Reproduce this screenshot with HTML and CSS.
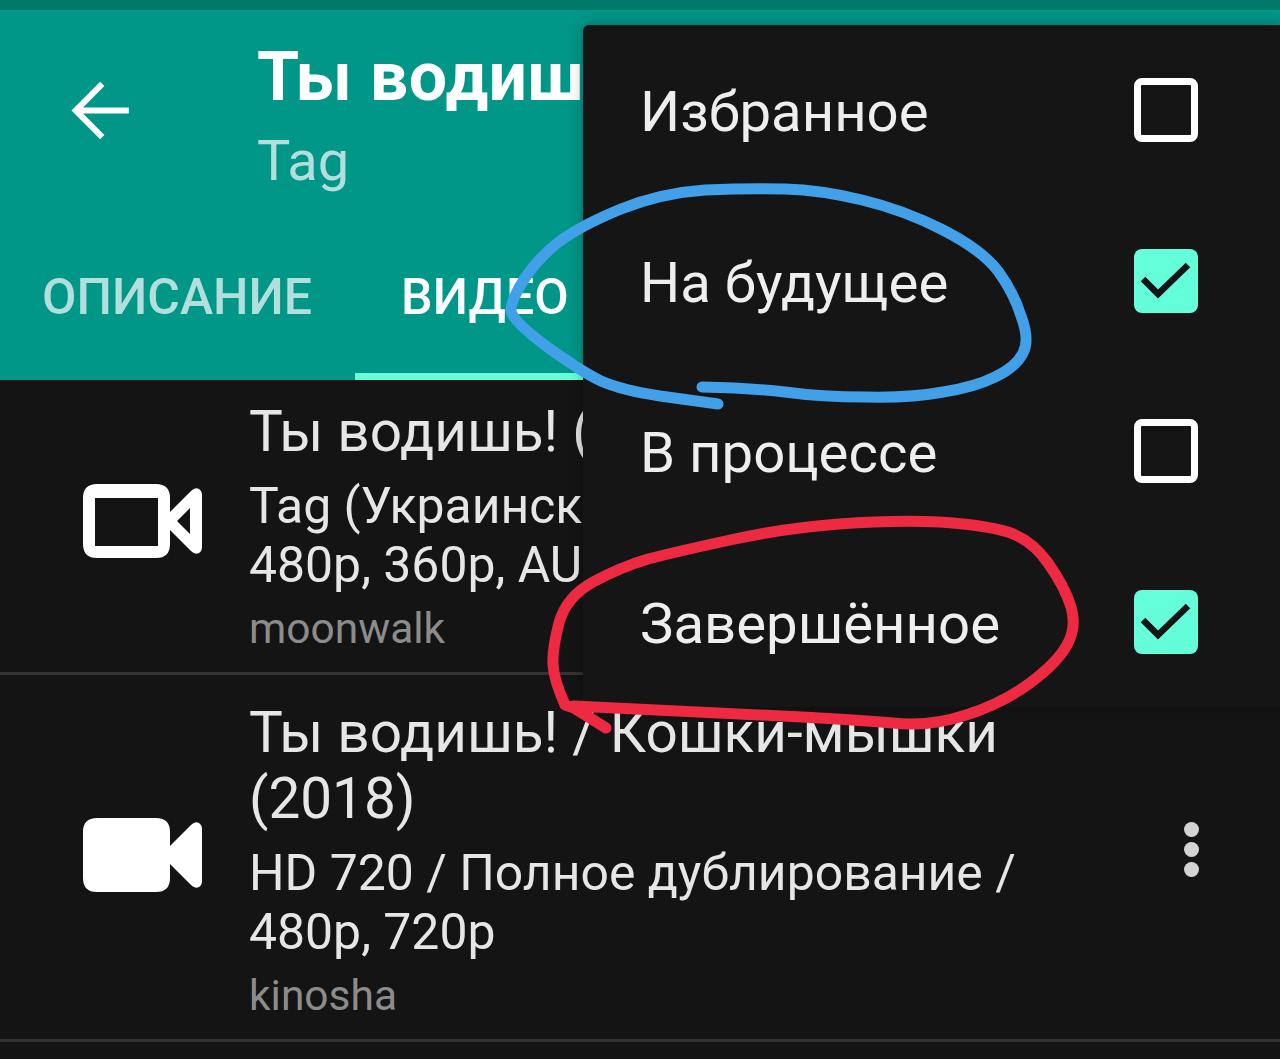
FILE: index.html
```html
<!DOCTYPE html>
<html lang="ru">
<head>
  <meta charset="UTF-8">
  <title>Ты водишь!</title>
  <link rel="stylesheet" href="styles.css">
</head>
<body>
  <div class="screen">
    <div class="status-bar"></div>

    <header class="appbar">
      <div class="toolbar">
        <svg class="back-icon" viewBox="0 0 24 24"><path d="M20 12H5M12.5 4.5L5 12l7.5 7.5"/></svg>
        <div class="toolbar-text">
          <div class="toolbar-title">Ты водиш</div>
          <div class="toolbar-sub">Tag</div>
        </div>
      </div>
      <nav class="tabs">
        <div class="tab">ОПИСАНИЕ</div>
        <div class="tab tab-active">ВИДЕО</div>
      </nav>
    </header>

    <div class="list">
      <div class="row">
        <svg class="video-icon" viewBox="0 0 119 74"><path fill-rule="evenodd" d="M14 0H73Q87 0 87 14V28L108 7Q112 3 116 5Q119 7 119 11V63Q119 67 116 69Q112 71 108 67L87 46V60Q87 74 73 74H14Q0 74 0 60V14Q0 0 14 0Z M12 14V62H75V14Z M94 37L107 50V24Z"/></svg>
        <div class="row-text">
          <div class="row-title">Ты водишь! (</div>
          <div class="row-sub">Tag (Украинск<br>480p, 360p, AU</div>
          <div class="row-source">moonwalk</div>
        </div>
      </div>
      <div class="row">
        <svg class="video-icon" viewBox="0 0 119 74"><path d="M14 0H73Q87 0 87 14V28L108 7Q112 3 116 5Q119 7 119 11V63Q119 67 116 69Q112 71 108 67L87 46V60Q87 74 73 74H14Q0 74 0 60V14Q0 0 14 0Z"/></svg>
        <div class="row-text">
          <div class="row-title">Ты водишь! / Кошки-мышки<br>(2018)</div>
          <div class="row-sub">HD 720 / Полное дублирование /<br>480p, 720p</div>
          <div class="row-source">kinosha</div>
        </div>
        <div class="row-more"><span></span><span></span><span></span></div>
      </div>
    </div>

    <!-- выпадающее меню -->
    <div class="menu">
      <div class="menu-item">
        <span>Избранное</span>
        <i class="box"></i>
      </div>
      <div class="menu-item">
        <span>На будущее</span>
        <i class="box box-on"><svg viewBox="0 0 64 64"><path d="M9 30l15 15 30-29"/></svg></i>
      </div>
      <div class="menu-item">
        <span>В процессе</span>
        <i class="box"></i>
      </div>
      <div class="menu-item">
        <span>Завершённое</span>
        <i class="box box-on"><svg viewBox="0 0 64 64"><path d="M9 30l15 15 30-29"/></svg></i>
      </div>
    </div>

    <!-- пометки от руки поверх скриншота -->
    <svg class="marks" viewBox="0 0 1280 1059">
      <path class="mark-blue" d="M718 404L660 396Q621 390 601 381Q582 372 546 346Q511 320 511 310Q511 300 525 278Q539 257 560 241Q582 225 621 209Q661 193 705 190Q750 188 785 189Q821 190 862 200Q904 210 943 230Q982 250 998 271Q1014 293 1021 316Q1030 340 1023 353Q1016 367 995 377Q975 387 943 392Q911 398 866 397Q821 397 785 392Q750 388 702 387"/>
      <path class="mark-red" d="M606 728L574 708L565 705Q554 680 553 665Q552 650 559 623Q566 597 593 582Q621 567 648 559Q675 552 730 540Q785 528 839 524Q894 520 939 522Q985 525 1008 532Q1032 540 1048 563Q1065 587 1071 607Q1077 627 1067 645Q1057 663 1030 683Q1003 703 966 715Q930 727 893 723Q857 720 802 717Q748 714 574 706"/>
    </svg>
  </div>
</body>
</html>
```

FILE: styles.css
```css
body {
  margin: 0;
  background: #141414;
  font-family: Roboto, "Noto Sans", sans-serif;
  color: #fff;
}

.screen {
  position: relative;
  height: 1059px;
  overflow: hidden;
}

.status-bar {
  height: 10px;
  background: #00796b;
}

/* шапка */
.appbar {
  position: relative;
  z-index: 1;
  height: 370px;
  background: #009688;
  display: flex;
  flex-direction: column;
}

.toolbar {
  display: flex;
  height: 250px;
}

.back-icon {
  width: 85px;
  height: 85px;
  margin: 58px 0 0 58px;
  fill: none;
  stroke: #fff;
  stroke-width: 1.7;
}

.toolbar-text {
  margin: 29px 0 0 114px;
}

.toolbar-title {
  font-size: 68px;
  line-height: 76px;
  font-weight: 700;
  letter-spacing: .6px;
  white-space: nowrap;
}

.toolbar-sub {
  margin-top: 11px;
  font-size: 56px;
  line-height: 70px;
  color: #b2dfdb;
}

.tabs {
  display: flex;
  height: 120px;
}

.tab {
  padding: 0 43px 0 42px;
  font-size: 50px;
  line-height: 74px;
  font-weight: 500;
  color: #b2dfdb;
}

.tab-active {
  flex: 1;
  color: #fff;
  box-sizing: border-box;
  height: 120px;
  padding-left: 46px;
  border-bottom: 7px solid #64ffda;
}

/* список */
.list {
  margin-top: -6px;
}

.row {
  display: flex;
  align-items: center;
  border-bottom: 3px solid #333;
  padding: 25px 0 14px 83px;
}

.video-icon {
  flex: none;
  width: 119px;
  height: 74px;
  fill: #fff;
  margin: 0 47px 16px 0;
}

.row-text {
  flex: 1;
}

.row-title {
  font-size: 56.7px;
  line-height: 66px;
  color: #e6e6e6;
}

.row-sub {
  margin-top: 12px;
  font-size: 49.9px;
  line-height: 59px;
  color: #e6e6e6;
}

.row-source {
  margin-top: 4px;
  font-size: 42.5px;
  line-height: 59px;
  color: #8c8c8c;
}

.row-more {
  display: flex;
  flex-direction: column;
  gap: 5px;
  margin: 0 81px 26px 0;
}

.row-more span {
  display: block;
  width: 15px;
  height: 15px;
  border-radius: 50%;
  background: #d4d4d4;
}

/* меню */
.menu {
  position: absolute;
  z-index: 2;
  top: 25px;
  left: 583px;
  right: 0;
  background: #151515;
  border-radius: 6px 0 0 6px;
  box-shadow: 0 0 14px rgba(0, 0, 0, .3);
}

.menu-item {
  display: flex;
  align-items: center;
  justify-content: space-between;
  height: 170.5px;
  padding: 0 82px 0 57px;
  font-size: 56.3px;
  color: #eee;
}

.menu-item span {
  margin-top: 4px;
}

.box {
  box-sizing: border-box;
  display: block;
  width: 64px;
  height: 64px;
  border: 7px solid #fff;
  border-radius: 8px;
}

.box-on {
  border: none;
  background: #64ffda;
}

.box-on svg {
  display: block;
  fill: none;
  stroke: #151515;
  stroke-width: 6.5;
}

.marks {
  position: absolute;
  z-index: 3;
  top: 0;
  left: 0;
  width: 1280px;
  height: 1059px;
  fill: none;
  stroke-width: 11;
  stroke-linecap: round;
  stroke-linejoin: round;
}

.mark-blue {
  stroke: #42a0e8;
}

.mark-red {
  stroke: #ee2a42;
}
```
